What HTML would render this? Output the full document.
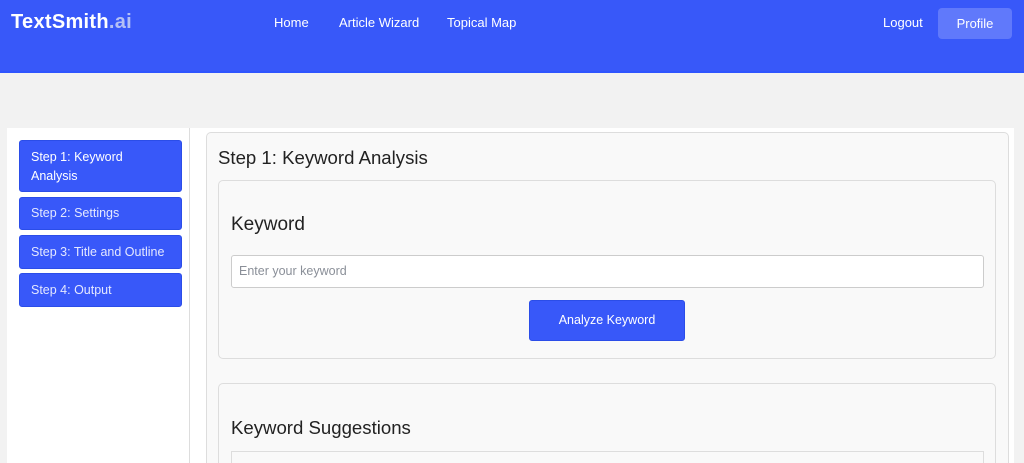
<!DOCTYPE html>
<html><head><style>
*{box-sizing:border-box;margin:0;padding:0}
html,body{width:1024px;height:463px;overflow:hidden}
body{background:#f2f2f2;font-family:"Liberation Sans",Arial,sans-serif;position:relative}
.hdr{position:absolute;left:0;top:0;width:1024px;height:73px;background:#3858f9;border-bottom:2px solid #2f55ff}
.logo{position:absolute;left:11px;top:11px;font-size:20px;font-weight:bold;color:#fff;letter-spacing:0.3px}
.logo span{color:#b4c0f5}
.nav{position:absolute;top:15px;font-size:13px;color:#fff}
.prof{position:absolute;left:938px;top:8px;width:74px;height:31px;border-radius:4px;background:#6079fb;color:#fff;font-size:13px;text-align:center;line-height:31px}
.wrap{position:absolute;left:7px;top:128px;width:1007px;height:340px;background:#fff}
.sb{position:absolute;left:7px;top:128px;width:183px;height:340px;border-right:1px solid #ddd}
.step{position:absolute;left:19px;width:163px;background:#3858f9;border:1px solid #2b4de8;border-radius:3px;color:#e4e8ff;font-size:12.5px;padding-left:11px}
.main{position:absolute;left:206px;top:132px;width:803px;height:340px;background:#f9f9f9;border:1px solid #ddd;border-radius:5px}
.card{position:absolute;left:218px;width:778px;background:#f9f9f9;border:1px solid #ddd;border-radius:5px}
h2{position:absolute;font-weight:normal;color:#222}
</style></head><body>
<div class="hdr">
<div class="logo">TextSmith<span>.ai</span></div>
<div class="nav" style="left:274px">Home</div>
<div class="nav" style="left:339px">Article Wizard</div>
<div class="nav" style="left:447px">Topical Map</div>
<div class="nav" style="left:883px">Logout</div>
<div class="prof">Profile</div>
</div>
<div class="wrap"></div>
<div class="sb"></div>
<div class="step" style="top:140px;height:52px;padding-top:7px;line-height:19px;color:#fff">Step 1: Keyword<br>Analysis</div>
<div class="step" style="top:197px;height:33px;line-height:31px">Step 2: Settings</div>
<div class="step" style="top:235px;height:34px;line-height:32px">Step 3: Title and Outline</div>
<div class="step" style="top:273px;height:34px;line-height:32px">Step 4: Output</div>
<div class="main"></div>
<h2 style="left:218px;top:147px;font-size:18.6px">Step 1: Keyword Analysis</h2>
<div class="card" style="top:180px;height:179px"></div>
<h2 style="left:231px;top:214px;font-size:19px">Keyword</h2>
<div style="position:absolute;left:231px;top:255px;width:753px;height:33px;background:#fff;border:1px solid #ccc;border-radius:3px;font-size:12.5px;color:#8a8f98;padding-left:7px;line-height:31px">Enter your keyword</div>
<div style="position:absolute;left:529px;top:300px;width:156px;height:41px;background:#3858f9;border:1px solid #2b4de8;border-radius:3px;color:#fff;font-size:12.5px;text-align:center;line-height:39px">Analyze Keyword</div>
<div class="card" style="top:383px;height:100px"></div>
<h2 style="left:231px;top:417px;font-size:18.6px">Keyword Suggestions</h2>
<div style="position:absolute;left:231px;top:451px;width:753px;height:30px;background:#f9f9f9;border:1px solid #ddd"></div>
</body></html>
